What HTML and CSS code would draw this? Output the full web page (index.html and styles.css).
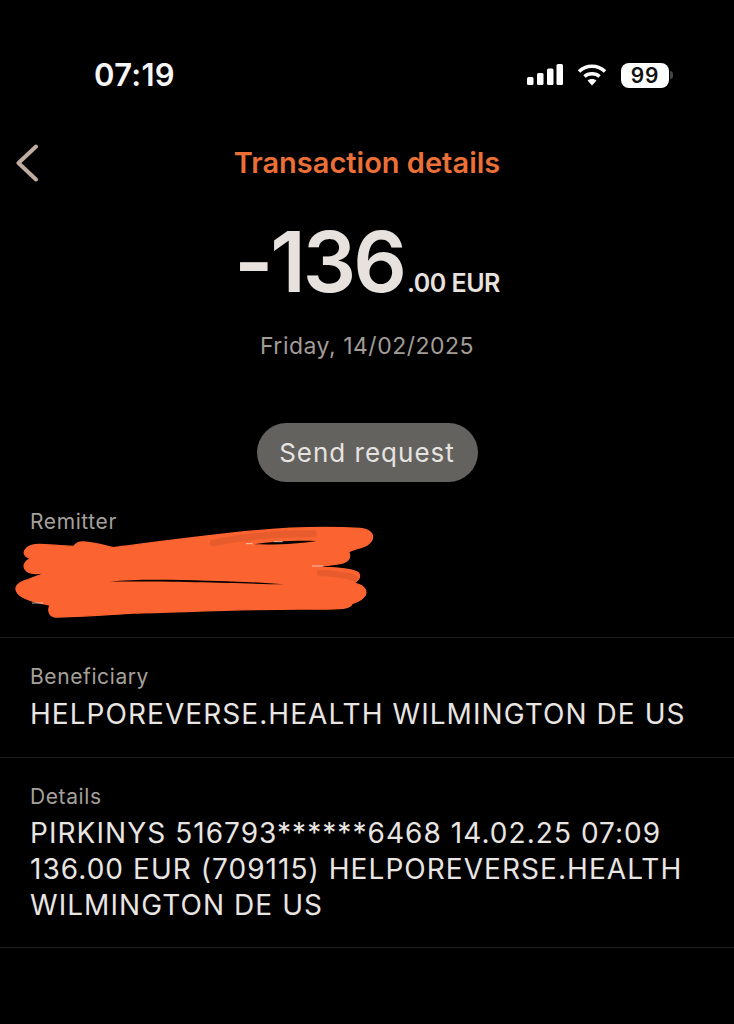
FILE: index.html
```html
<!DOCTYPE html>
<html lang="en">
<head>
<meta charset="utf-8">
<title>Transaction details</title>
<link rel="stylesheet" href="styles.css">
</head>
<body>
<main class="screen">
  <div class="status">
    <span class="time">07:19</span>
    <div class="status-icons">
      <svg class="signal" width="36" height="24" viewBox="0 0 36 24" aria-hidden="true">
        <rect x="0" y="14" width="6.5" height="8" rx="1.5"/>
        <rect x="10" y="10" width="6.5" height="12" rx="1.5"/>
        <rect x="20" y="5.500" width="6.500" height="16.500" rx="1.500"/>
        <rect x="29.500" y="1" width="6.500" height="21" rx="1.500"/>
      </svg>
      <svg class="wifi" width="32" height="24" viewBox="0 0 32 24" aria-hidden="true">
        <path class="arc" d="M3 8.500C10 1.500 22 1.500 29 8.500"/>
        <path class="arc" d="M8.500 13.500C12.500 9.800 19.500 9.800 23.500 13.500"/>
        <path class="dot" d="M16 22.500L11.500 17.500C14 15.500 18 15.500 20.500 17.500Z"/>
      </svg>
      <div class="battery"><span class="battery-body">99</span><span class="battery-cap"></span></div>
    </div>
  </div>

  <header class="nav">
    <svg class="back" width="26" height="38" viewBox="0 0 26 38" aria-hidden="true">
      <path d="M21 2.500L3.500 19L21 35.500"/>
    </svg>
    <h1 class="title">Transaction details</h1>
  </header>

  <section class="summary">
    <div class="amount"><span class="amount-main">-136</span><span class="amount-sub">.00 EUR</span></div>
    <div class="date">Friday, 14/02/2025</div>
    <button class="request" type="button">Send request</button>
  </section>

  <section class="row row-remitter">
    <div class="label">Remitter</div>
    <svg class="scribble" width="400" height="140" viewBox="0 0 1200 420" aria-hidden="true">
      <path class="ink" d="M78 150C95 128 130 138 222 142C232 124 250 124 340 146C420 136 520 122 700 102C820 88 960 82 1080 88C1120 92 1128 116 1104 136C1090 146 1060 150 1046 158C1052 172 1050 188 1020 194C990 198 960 202 940 205C1000 205 1060 208 1076 222C1084 236 1072 248 1060 252C1090 258 1102 272 1096 288C1088 304 1070 308 1056 314C1052 328 1040 332 900 330C760 330 560 338 400 342C300 348 220 354 165 354C148 352 142 335 150 318C110 310 70 302 54 284C40 266 50 252 84 242C105 234 125 226 142 220C120 224 95 228 80 216C66 204 72 188 92 178C72 172 68 160 78 150Z"/>
      <path class="dark" d="M640 132C720 114 830 104 940 104"/>
      <path class="dark2" d="M960 222C1000 224 1040 228 1064 238"/>
      <path class="hole" d="M760 136C810 128 880 124 950 126C900 134 840 138 760 136Z"/>
      <path class="hole" d="M330 248C400 240 520 242 620 245C700 247 780 250 850 256C740 254 500 246 330 248Z"/>
      <path class="speck" d="M738 134L758 134M822 128L848 128M936 201L970 201M96 312L130 312"/>
    </svg>
  </section>
  <section class="row">
    <div class="label">Beneficiary</div>
    <div class="value">HELPOREVERSE.HEALTH WILMINGTON DE US</div>
  </section>
  <section class="row row-details">
    <div class="label">Details</div>
    <div class="value">PIRKINYS 516793******6468 14.02.25 07:09<br>136.00 EUR (709115) HELPOREVERSE.HEALTH<br>WILMINGTON DE US</div>
  </section>
</main>
</body>
</html>
```
FILE: styles.css
```css
html, body {
  margin: 0;
  padding: 0;
  background: #000;
}
.screen {
  width: 734px;
  height: 1024px;
  overflow: hidden;
  background: #000;
  font-family: Inter, "Liberation Sans", sans-serif;
}
.status {
  height: 150px;
  box-sizing: border-box;
  padding: 58px 61px 0 94px;
  display: flex;
  justify-content: space-between;
  align-items: flex-start;
}
.time {
  color: #f6f6f6;
  font-size: 31px;
  line-height: 34px;
  font-weight: 600;
  letter-spacing: 0.3px;
}
.status-icons {
  display: flex;
  align-items: center;
  gap: 13px;
  height: 34px;
}
.signal rect { fill: #fff; }
.wifi .arc { fill: none; stroke: #fff; stroke-width: 3.500; }
.wifi .dot { fill: #fff; }
.battery { display: flex; align-items: center; gap: 1px; }
.battery-body {
  width: 48px;
  height: 25px;
  border-radius: 8px;
  background: #fff;
  color: #111;
  font-size: 21px;
  font-weight: 600;
  line-height: 25px;
  letter-spacing: 0.8px;
  text-align: center;
}
.battery-cap {
  width: 3px;
  height: 8px;
  border-radius: 0 3px 3px 0;
  background: #444;
}
.nav {
  position: relative;
  height: 26px;
  display: flex;
  align-items: center;
  justify-content: center;
}
.back {
  position: absolute;
  left: 15px;
  top: -6px;
  fill: none;
  stroke: #c0aca0;
  stroke-width: 4px;
  stroke-linecap: round;
  stroke-linejoin: round;
}
.title {
  margin: 0;
  color: #ea7038;
  font-size: 29px;
  line-height: 26px;
  font-weight: 600;
}
.summary {
  display: flex;
  flex-direction: column;
  align-items: center;
}
.amount {
  margin-top: 40px;
  height: 92px;
  display: flex;
  align-items: baseline;
  color: #e8e2df;
  line-height: 92px;
  font-weight: 600;
}
.amount-main {
  font-size: 84px;
  letter-spacing: -3px;
}
.amount-sub {
  font-size: 25px;
  font-weight: 600;
  letter-spacing: -0.5px;
  margin-left: 3px;
}
.date {
  margin-top: 23px;
  color: #a29c97;
  font-size: 23px;
  line-height: 30px;
  letter-spacing: 0.5px;
}
.request {
  margin-top: 62px;
  width: 221px;
  height: 59px;
  border: 0;
  border-radius: 30px;
  background: #63625f;
  color: #e6e3e0;
  font: 400 26px/57px Inter, "Liberation Sans", sans-serif;
  letter-spacing: 1px;
}
.row {
  box-sizing: border-box;
  padding: 26px 0 0 30px;
  height: 120px;
  border-bottom: 1px solid #1e1e1e;
}
.row-remitter {
  position: relative;
  height: 156px;
  padding-top: 27px;
}
.row-details { height: 190px; }
.label {
  color: #a5a09b;
  font-size: 21px;
  line-height: 26px;
  letter-spacing: 0.6px;
}
.value {
  margin-top: 6px;
  color: #e8e5e2;
  font-size: 28px;
  line-height: 36px;
  letter-spacing: 1.05px;
}
.row-details .value { margin-top: 5px; }
.scribble {
  position: absolute;
  left: 0;
  top: 17px;
}
.ink {
  fill: #fb6331;
  stroke: #fb6331;
  stroke-width: 4px;
  stroke-linejoin: round;
}
.hole { fill: #000; }
.dark, .dark2 {
  fill: none;
  stroke: #d4532a;
  stroke-linecap: round;
}
.dark { stroke-width: 20px; opacity: 0.5; }
.dark2 { stroke-width: 18px; opacity: 0.5; }
.speck {
  fill: none;
  stroke: #eed8cc;
  stroke-width: 3px;
  opacity: 0.8;
}
```
